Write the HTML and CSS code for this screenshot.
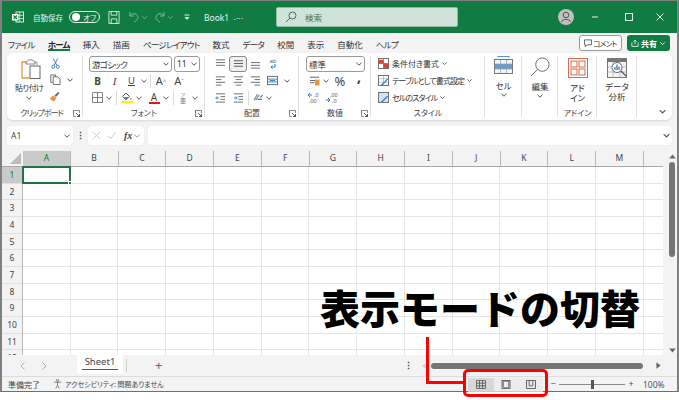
FILE: index.html
```html
<!DOCTYPE html>
<html lang="ja">
<head>
<meta charset="utf-8">
<title>Excel</title>
<link rel="stylesheet" href="styles.css">
</head>
<body>
<svg class="defs" width="0" height="0">
  <symbol id="chev" viewBox="0 0 8 8"><path d="M1.5 2.8 4 5.2 6.500 2.800" fill="none" stroke="currentColor" stroke-width="1"/></symbol>
  <symbol id="launch" viewBox="0 0 7 7"><path d="M.5 3V.5H6.500V3M.5 .5V6.500H3" fill="none" stroke="#666" stroke-width=".8"/><path d="M3 3 6.500 6.500M6.500 4V6.500H4" fill="none" stroke="#444" stroke-width=".9"/></symbol>
</svg>
<div class="window">
  <header class="titlebar">
    <svg class="ic-app" viewBox="0 0 12 12"><rect x="4" y="1" width="7.500" height="10" fill="none" stroke="#dfeee6"/><path d="M4 4.300H11.500M4 7.600H11.500M7.700 1V11" stroke="#dfeee6" stroke-width=".8"/><rect x="0" y="3" width="6.500" height="6.500" fill="#fff"/><path d="M1.500 4.500 5 8M5 4.500 1.500 8" stroke="#107c41" stroke-width="1.100"/></svg>
    <span class="autosave">自動保存</span>
    <span class="toggle"><i class="knob"></i><b>オフ</b></span>
    <svg class="ic-save" viewBox="0 0 12 14"><path d="M.5 .5H11.500V13.500H.5ZM3 .5V4.500H9V.5M3 13.500V8.500H9V13.500" fill="none" stroke="#d9eae0"/></svg>
    <svg class="ic-undo" viewBox="0 0 12 12"><path d="M2 1V5H6M2 5C4 2 8 2 9.500 4.500 11 7.500 8.500 10 6 11" fill="none" stroke="#7fb79a" stroke-width="1"/></svg>
    <svg class="tb-chev" viewBox="0 0 8 8"><use href="#chev"/></svg>
    <svg class="ic-redo" viewBox="0 0 12 12"><path d="M10 1V5H6M10 5C8 2 4 2 2.500 4.500 1 7.500 3.500 10 6 11" fill="none" stroke="#7fb79a" stroke-width="1"/></svg>
    <svg class="tb-chev" viewBox="0 0 8 8"><use href="#chev"/></svg>
    <svg class="ic-custom" viewBox="0 0 6 7"><path d="M.5 1H5.500" stroke="#dfeee6"/><path d="M.5 3 3 6 5.500 3Z" fill="#dfeee6"/></svg>
    <div class="doc">Book1 <small>-···</small></div>
    <div class="search">
      <svg class="ic-search" viewBox="0 0 12 12"><circle cx="7.500" cy="4.500" r="3.500" fill="none" stroke="#40755a"/><path d="M5 7 1 11" stroke="#40755a"/></svg>
      <span>検索</span>
    </div>
    <div class="spacer"></div>
    <svg class="avatar" viewBox="0 0 16 16"><circle cx="8" cy="8" r="8" fill="#c0c0c0"/><circle cx="8" cy="6" r="2.800" fill="none" stroke="#555"/><path d="M3.500 13C4 9.500 12 9.500 12.500 13" fill="none" stroke="#555"/></svg>
    <div class="winbtn min"><svg viewBox="0 0 8 8"><path d="M1 4H7" stroke="#e6f1eb"/></svg></div>
    <div class="winbtn"><svg viewBox="0 0 8 8"><rect x=".5" y=".5" width="7" height="7" fill="none" stroke="#e6f1eb"/></svg></div>
    <div class="winbtn"><svg viewBox="0 0 8 8"><path d="M.5 .5 7.500 7.500M7.500 .5 .5 7.500" stroke="#e6f1eb"/></svg></div>
  </header>

  <nav class="tabs">
    <span class="tab kana">ファイル</span>
    <span class="tab kana active">ホーム</span>
    <span class="tab">挿入</span>
    <span class="tab">描画</span>
    <span class="tab kana">ページレイアウト</span>
    <span class="tab">数式</span>
    <span class="tab kana">データ</span>
    <span class="tab">校閲</span>
    <span class="tab">表示</span>
    <span class="tab">自動化</span>
    <span class="tab kana">ヘルプ</span>
    <div class="spacer"></div>
    <button class="comment"><svg viewBox="0 0 9 9"><path d="M.5 1H8.500V6.500H3.500L1.500 8.500V6.500H.5Z" fill="none" stroke="#444" stroke-width=".9"/></svg><span class="kana">コメント</span></button>
    <button class="share"><svg viewBox="0 0 9 9"><path d="M1 4V8.300H8V4M4.500 6V1.500M2.800 3 4.500 1.300 6.200 3" fill="none" stroke="#fff" stroke-width=".9"/></svg>共有<svg class="share-chev" viewBox="0 0 8 8"><use href="#chev"/></svg></button>
  </nav>

  <section class="ribbon">
    <div class="group g-clip">
      <div class="body clip">
        <div class="big paste">
          <svg class="ic-paste" viewBox="0 0 20 20"><path d="M5 3H1V19H8" fill="none" stroke="#e69a3c" stroke-width="1.300"/><path d="M14 3H16V6" fill="none" stroke="#999" /><path d="M5 3 8 .8H11L14 3V5H5Z" fill="#fff" stroke="#777" stroke-width=".9"/><rect x="9" y="7" width="10" height="12.500" fill="#fff" stroke="#666"/></svg>
          <span>貼り付け</span>
          <svg class="chev" viewBox="0 0 8 8"><use href="#chev"/></svg>
        </div>
        <div class="clip-tools">
          <div class="row r-cut"><svg class="ic" viewBox="0 0 12 12"><path d="M3.500 .5 7.500 8M8.500 .5 4.500 8" stroke="#3b77b8" stroke-width="1"/><circle cx="3.500" cy="9.500" r="1.700" fill="none" stroke="#3b77b8"/><circle cx="8.500" cy="9.500" r="1.700" fill="none" stroke="#3b77b8"/></svg></div>
          <div class="row r-copy"><svg class="ic" viewBox="0 0 12 12"><path d="M3 9H.8V1H6V3" fill="none" stroke="#555" stroke-width=".9"/><path d="M3.500 3H8.500L11 5.500V11.500H3.500Z" fill="#fff" stroke="#555" stroke-width=".9"/></svg><svg class="chev" viewBox="0 0 8 8"><use href="#chev"/></svg></div>
          <div class="row r-brush"><svg class="ic" viewBox="0 0 12 12"><path d="M.8 8 5 5 8 8 5.500 11.500C4 11 2 10 .8 8Z" fill="#e8963a"/><path d="M6 5 10 1 11.500 2.500 7.500 6.500" fill="#6a6a6a"/></svg></div>
        </div>
      </div>
      <div class="label label-clip">クリップボード<svg class="launch"><use href="#launch"/></svg></div>
    </div>

    <div class="group g-font">
      <div class="body">
        <div class="row selects">
          <div class="select font-name"><span class="kana">游ゴシック</span><svg class="chev" viewBox="0 0 8 8"><use href="#chev"/></svg></div>
          <div class="select font-size"><span>11</span><svg class="chev" viewBox="0 0 8 8"><use href="#chev"/></svg></div>
        </div>
        <div class="row">
          <span class="s17 glyph bold">B</span>
          <span class="s17 glyph ital">I</span>
          <span class="s17 glyph under">U</span>
          <span class="s8"><svg class="chev" viewBox="0 0 8 8"><use href="#chev"/></svg></span>
          <i class="sep w4"></i>
          <span class="s18 glyph grow">A<sup>^</sup></span>
          <span class="s18 glyph grow">A<sup class="blue">ˇ</sup></span>
        </div>
        <div class="row">
          <span class="s16"><svg class="ic" viewBox="0 0 12 12"><path d="M.5 .5H11.500V11.500H.5ZM6 .5V11.500M.5 6H11.500" fill="none" stroke="#666" stroke-width=".9"/></svg></span>
          <span class="s8"><svg class="chev" viewBox="0 0 8 8"><use href="#chev"/></svg></span>
          <i class="sep w6"></i>
          <span class="s16 colored"><svg class="ic-fill" viewBox="0 0 12 9"><path d="M1.500 4.500 5 1 8.500 4.500 5 8Z" fill="#fff" stroke="#555"/><path d="M2 5H8L5 8Z" fill="#4a8fcf"/><path d="M10 5.500C11 7 11 8 10 8 9 8 9 7 10 5.500Z" fill="#e8963a"/></svg><i class="bar yellow"></i></span>
          <span class="s8"><svg class="chev" viewBox="0 0 8 8"><use href="#chev"/></svg></span>
          <span class="s16 colored ml3"><span class="glyph color-a">A</span><i class="bar red"></i></span>
          <span class="s8"><svg class="chev" viewBox="0 0 8 8"><use href="#chev"/></svg></span>
          <i class="sep w5"></i>
          <span class="s16 phon"><small>ア</small><b>亜</b></span>
          <span class="s8"><svg class="chev" viewBox="0 0 8 8"><use href="#chev"/></svg></span>
        </div>
      </div>
      <div class="label">フォント<svg class="launch"><use href="#launch"/></svg></div>
    </div>

    <div class="group g-align">
      <div class="body">
        <div class="row">
          <span class="s18"><svg class="ic" viewBox="0 0 12 12"><path d="M1 2H11M1 5H11M1 8H11" stroke="#666"/></svg></span>
          <span class="s18 pressed"><svg class="ic" viewBox="0 0 12 12"><path d="M1 3H11M1 6H11M1 9H11" stroke="#555"/></svg></span>
          <span class="s17"><svg class="ic" viewBox="0 0 12 12"><path d="M1 5H11M1 8H11M1 11H11" stroke="#666"/></svg></span>
          <span class="s18 wrap"><span>ab</span><svg viewBox="0 0 8 6"><path d="M6 0V3H2M3.500 1.500 2 3 3.500 4.500" fill="none" stroke="#2b7cd3"/></svg></span>
        </div>
        <div class="row">
          <span class="s18"><svg class="ic" viewBox="0 0 12 12"><path d="M1 2H11M1 5H7M1 8H11M1 11H7" stroke="#666"/></svg></span>
          <span class="s18"><svg class="ic" viewBox="0 0 12 12"><path d="M1 2H11M3 5H9M1 8H11M3 11H9" stroke="#666"/></svg></span>
          <span class="s17"><svg class="ic" viewBox="0 0 12 12"><path d="M1 2H11M5 5H11M1 8H11M5 11H11" stroke="#666"/></svg></span>
          <span class="s16"><svg class="ic" viewBox="0 0 12 12"><rect x=".5" y="1.500" width="11" height="9" fill="none" stroke="#666"/><path d="M.5 4.500H11.500M.5 7.500H11.500" stroke="#2b7cd3"/><path d="M3 6H9" stroke="#2b7cd3"/></svg></span>
          <span class="s8 nudge"><svg class="chev" viewBox="0 0 8 8"><use href="#chev"/></svg></span>
        </div>
        <div class="row">
          <span class="s18"><svg class="ic" viewBox="0 0 12 12"><path d="M1 2H11M6 5H11M6 8H11M1 11H11" stroke="#666"/><path d="M1 6.500H4.500M2.500 4.800 .8 6.500 2.500 8.200" fill="none" stroke="#2b7cd3"/></svg></span>
          <span class="s18"><svg class="ic" viewBox="0 0 12 12"><path d="M1 2H11M6 5H11M6 8H11M1 11H11" stroke="#666"/><path d="M1 6.500H4.500M3 4.800 4.700 6.500 3 8.200" fill="none" stroke="#2b7cd3"/></svg></span>
          <i class="sep w2"></i>
          <span class="s16"><svg class="ic" viewBox="0 0 12 12"><path d="M2 9 6 2.500M4 9 8 3" stroke="#777" stroke-width="1.100"/><path d="M6 8H11M9 6 11.500 3.500" stroke="#2b7cd3" stroke-width="1.200"/></svg></span>
          <span class="s8"><svg class="chev" viewBox="0 0 8 8"><use href="#chev"/></svg></span>
        </div>
      </div>
      <div class="label">配置<svg class="launch"><use href="#launch"/></svg></div>
    </div>

    <div class="group g-num">
      <div class="body">
        <div class="row"><div class="select num-format"><span>標準</span><svg class="chev" viewBox="0 0 8 8"><use href="#chev"/></svg></div></div>
        <div class="row">
          <span class="s16"><svg class="ic" viewBox="0 0 12 12"><path d="M1 2.500H11M1 6H7M1 8.500H6" stroke="#666" stroke-width="1.200"/><rect x="6.500" y="5" width="5" height="6.500" fill="#e8963a"/></svg></span>
          <span class="s8 ml-s"><svg class="chev" viewBox="0 0 8 8"><use href="#chev"/></svg></span>
          <span class="s18 glyph pct">%</span>
          <span class="s16 comma">,</span>
        </div>
        <div class="row">
          <span class="s16 dec"><svg viewBox="0 0 14 12"><path d="M1 3H5M3 1 1 3 3 5" fill="none" stroke="#2b7cd3"/><text x="7" y="5" class="dectxt">.0</text><text x="2" y="11" class="dectxt">.00</text></svg></span>
          <span class="s16 dec ml2"><svg viewBox="0 0 14 12"><path d="M1 8H5M3 6 5 8 3 10" fill="none" stroke="#2b7cd3"/><text x="5" y="5" class="dectxt">.00</text><text x="7" y="11" class="dectxt">.0</text></svg></span>
        </div>
      </div>
      <div class="label">数値<svg class="launch"><use href="#launch"/></svg></div>
    </div>

    <div class="group g-style">
      <div class="body">
        <div class="row style-row"><svg class="ic" viewBox="0 0 12 12"><rect x=".5" y=".5" width="11" height="11" fill="#fff" stroke="#666"/><path d="M.5 2H6V6H.5ZM6 6H11.500V11H6Z" fill="#d9453a"/><path d="M6 .5V11.500M.5 6H11.500" stroke="#666" stroke-width=".7"/></svg><span>条件付き書式</span><svg class="chev" viewBox="0 0 8 8"><use href="#chev"/></svg></div>
        <div class="row style-row"><svg class="ic" viewBox="0 0 12 12"><rect x=".5" y=".5" width="11" height="11" fill="#fff" stroke="#666"/><path d="M.5 4H11.500M.5 8H11.500M6 .5V11.500" stroke="#8aa" stroke-width=".7"/><path d="M3 11 10 4 11 5 4.500 11.500Z" fill="#2b7cd3"/></svg><span class="kana">テーブルとして書式設定</span><svg class="chev" viewBox="0 0 8 8"><use href="#chev"/></svg></div>
        <div class="row style-row"><svg class="ic" viewBox="0 0 12 12"><rect x=".5" y=".5" width="11" height="11" fill="#cfe3f5" stroke="#666"/><path d="M3 11 10 4 11 5 4.500 11.500Z" fill="#2b7cd3"/></svg><span class="kana">セルのスタイル</span><svg class="chev" viewBox="0 0 8 8"><use href="#chev"/></svg></div>
      </div>
      <div class="label">スタイル</div>
    </div>

    <div class="group g-cell">
      <div class="body bigcol">
        <svg class="ic-big" viewBox="0 0 19 19"><path d="M4 .5H15M4 0V1.500M15 0V1.500" stroke="#2b7cd3" stroke-width=".8"/><rect x=".5" y="3.500" width="18" height="14" fill="#f4f4f4" stroke="#777"/><rect x="1" y="8" width="17" height="5" fill="#5ba0dd"/><path d="M6.500 3.500V17.500M12.500 3.500V17.500M.5 8H18.500M.5 13H18.500" stroke="#999" stroke-width=".7"/></svg>
        <span class="biglabel">セル</span>
        <svg class="chev" viewBox="0 0 8 8"><use href="#chev"/></svg>
      </div>
      <div class="label"></div>
    </div>

    <div class="group g-edit">
      <div class="body bigcol">
        <svg class="ic-big" viewBox="0 0 21 21"><circle cx="13" cy="8" r="7" fill="none" stroke="#666"/><path d="M8 13 1 20" stroke="#666"/></svg>
        <span class="biglabel">編集</span>
        <svg class="chev" viewBox="0 0 8 8"><use href="#chev"/></svg>
      </div>
      <div class="label"></div>
    </div>

    <div class="group g-addin">
      <div class="body bigcol">
        <svg class="ic-big" viewBox="0 0 20 20"><rect x=".5" y=".5" width="19" height="19" fill="none" stroke="#d86b4d"/><rect x="3" y="3" width="6" height="6" fill="none" stroke="#d86b4d"/><rect x="11" y="3" width="6" height="6" fill="none" stroke="#d86b4d"/><rect x="3" y="11" width="6" height="6" fill="none" stroke="#d86b4d"/><rect x="11" y="11" width="6" height="6" fill="none" stroke="#d86b4d"/></svg>
        <span class="biglabel two">アド<br>イン</span>
      </div>
      <div class="label">アドイン</div>
    </div>

    <div class="group g-data">
      <div class="body bigcol">
        <svg class="ic-big" viewBox="0 0 20 20"><rect x=".5" y=".5" width="19" height="19" fill="#f4f4f4" stroke="#777"/><rect x="1" y="1" width="18" height="3" fill="#777"/><path d="M.5 9H19.500M.5 14H19.500M6 4V19.500M13 4V19.500" stroke="#aaa" stroke-width=".7"/><circle cx="10" cy="9.500" r="5" fill="#fff" stroke="#666"/><path d="M8 12V9M10 12V6.500M12 12V8.500" stroke="#2b7cd3" stroke-width="1.300"/><path d="M14 13 19 18" stroke="#555" stroke-width="1.300"/></svg>
        <span class="biglabel two tight">データ<br>分析</span>
      </div>
      <div class="label"></div>
    </div>

    <div class="group g-end">
      <svg class="collapse" viewBox="0 0 8 8"><use href="#chev"/></svg>
    </div>
  </section>

  <section class="formula">
    <div class="namebox"><span>A1</span><svg class="chev" viewBox="0 0 8 8"><use href="#chev"/></svg></div>
    <span class="dots">⋮</span>
    <div class="funcbox">
      <svg class="fx-ic" viewBox="0 0 10 10"><path d="M1 1 9 9M9 1 1 9" stroke="#c4c4c4"/></svg>
      <svg class="fx-ic" viewBox="0 0 10 10"><path d="M1 5.500 4 8.500 9.500 1.500" fill="none" stroke="#c4c4c4"/></svg>
      <span class="fx">fx</span>
      <svg class="chev" viewBox="0 0 8 8"><use href="#chev"/></svg>
    </div>
    <div class="input"><svg class="chev" viewBox="0 0 8 8"><use href="#chev"/></svg></div>
  </section>

  <section class="sheet">
    <div class="grid-wrap">
      <div class="colheads">
        <div class="corner"><i></i></div>
        <span class="ch sel">A</span><span class="ch">B</span><span class="ch">C</span><span class="ch">D</span><span class="ch">E</span><span class="ch">F</span><span class="ch">G</span><span class="ch">H</span><span class="ch">I</span><span class="ch">J</span><span class="ch">K</span><span class="ch">L</span><span class="ch">M</span><span class="ch"></span>
      </div>
      <div class="gridbody">
        <div class="rowheads">
          <span class="rh sel">1</span><span class="rh">2</span><span class="rh">3</span><span class="rh">4</span><span class="rh">5</span><span class="rh">6</span><span class="rh">7</span><span class="rh">8</span><span class="rh">9</span><span class="rh">10</span><span class="rh">11</span><span class="rh">12</span>
        </div>
        <div class="cells"><div class="active-cell"><i></i></div></div>
      </div>
    </div>
    <div class="vscroll">
      <svg class="arrow" viewBox="0 0 8 6"><path d="M4 .5 8 5.500H0Z" fill="#666"/></svg>
      <i class="vthumb"></i>
      <div class="spacer"></div>
      <svg class="arrow" viewBox="0 0 8 6"><path d="M4 5.500 8 .5H0Z" fill="#666"/></svg>
    </div>
  </section>

  <section class="sheettabs">
    <svg class="nav" viewBox="0 0 6 8"><path d="M4.500 .5 1 4 4.500 7.500" fill="none" stroke="#aaa"/></svg>
    <svg class="nav nav2" viewBox="0 0 6 8"><path d="M1.500 .5 5 4 1.500 7.500" fill="none" stroke="#aaa"/></svg>
    <div class="sheet-tab"><span>Sheet1</span></div>
    <i class="tab-sep"></i>
    <span class="plus">+</span>
    <div class="spacer"></div>
    <span class="dots tabdots">⋮</span>
    <svg class="hleft" viewBox="0 0 6 8"><path d="M.5 4 5.500 0V8Z" fill="#ccc"/></svg>
    <i class="hthumb"></i>
    <svg class="hright" viewBox="0 0 6 8"><path d="M5.500 4 .5 0V8Z" fill="#666"/></svg>
  </section>

  <footer class="status">
    <span class="ready">準備完了</span>
    <svg class="ic-access" viewBox="0 0 11 11"><circle cx="5" cy="1.500" r="1.200" fill="none" stroke="#555" stroke-width=".8"/><path d="M1 3.500H9M5 3.500V7L3 10.500M5 7 7 10.500" fill="none" stroke="#555" stroke-width=".8"/></svg>
    <span class="access">アクセシビリティ: 問題ありません</span>
    <div class="spacer"></div>
    <div class="views">
      <span class="view on"><svg viewBox="0 0 11 10"><path d="M.5 .5H10.500V9.500H.5ZM.5 3.500H10.500M.5 6.500H10.500M3.800 .5V9.500M7.200 .5V9.500" fill="none" stroke="#444" stroke-width=".8"/></svg></span>
      <span class="view"><svg viewBox="0 0 10 10"><rect x=".5" y=".5" width="9" height="9" fill="#bbb" stroke="#444" stroke-width=".8"/><rect x="2.500" y="1.500" width="5" height="7" fill="#eee" stroke="#555" stroke-width=".6"/></svg></span>
      <span class="view"><svg viewBox="0 0 11 10"><path d="M.5 .5H10.500V9.500H.5ZM3.500 .5V6.500H7.500V.5" fill="none" stroke="#444" stroke-width=".9"/></svg></span>
    </div>
    <span class="zoom-sign">−</span>
    <div class="slider"><i></i></div>
    <span class="zoom-sign">+</span>
    <span class="pct100">100%</span>
  </footer>

  <div class="callout-title">表示モードの切替</div>
  <i class="callout-v"></i>
  <i class="callout-h"></i>
  <i class="callout-box"></i>
</div>
</body>
</html>
```

FILE: styles.css
```css
* { box-sizing: border-box; }
html, body { margin: 0; padding: 0; background: #fff; }
body { width: 679px; height: 400px; overflow: hidden; font-family: "Noto Sans CJK JP", "Noto Sans", sans-serif; font-feature-settings: "palt"; color: #333; }
.defs { position: absolute; }
svg { display: block; flex: none; }
i { display: block; }
button { font: inherit; padding: 0; }
.spacer { flex: 1; }
.kana { letter-spacing: -.7px; }
.window { position: relative; width: 679px; height: 392px; border: 2px solid #808080; border-top-width: 1px; border-bottom: 1px solid #3f8a63; background: #f3f3f3; display: flex; flex-direction: column; }

/* title bar */
.titlebar { height: 32px; background: #107c41; display: flex; align-items: center; color: #e8f2ec; flex: none; padding-right: 2px; }
.ic-app { width: 12px; height: 12px; margin-left: 10px; }
.autosave { font-size: 7.500px; margin-left: 9px; width: 30px; white-space: nowrap; }
.toggle { margin-left: 6px; width: 31px; height: 12px; border: 1px solid #e8f2ec; border-radius: 7px; display: flex; align-items: center; padding-left: 2px; }
.knob { width: 8px; height: 8px; border-radius: 50%; background: #fff; }
.toggle b { font-weight: 400; font-size: 7.500px; margin-left: 3px; }
.ic-save { width: 12px; height: 13px; margin-left: 8px; }
.ic-undo, .ic-redo { width: 12px; height: 12px; margin-left: 8px; }
.ic-redo { margin-left: 6px; }
.tb-chev { width: 7px; height: 7px; color: #7fb79a; margin-left: 1px; }
.ic-custom { width: 6px; height: 7px; margin-left: 10px; }
.doc { margin-left: 14px; width: 72px; font-family: "Noto Sans", sans-serif; font-size: 8.500px; white-space: nowrap; }
.doc small { font-size: 7px; margin-left: 2px; letter-spacing: .5px; }
.search { width: 182px; height: 20px; background: #cfe3d8; border: 1px solid #8fb9a3; border-radius: 2px; display: flex; align-items: center; padding-left: 8px; color: #40755a; font-size: 8.500px; }
.search span { margin-left: 8px; }
.ic-search { width: 12px; height: 12px; }
.avatar { width: 16px; height: 16px; margin-right: 5px; }
.winbtn { width: 31px; display: flex; justify-content: center; }
.winbtn svg { width: 8px; height: 8px; }
.winbtn.min { margin-right: 3px; }

/* tabs */
.tabs { height: 20px; flex: none; display: flex; align-items: flex-start; padding: 0 7px 0 6px; gap: 13px; font-size: 8.500px; color: #333; }
.tab { height: 18px; line-height: 22px; position: relative; white-space: nowrap; }
.tab.active { font-weight: 700; color: #222; }
.tab.active::after { content: ""; position: absolute; left: 0; right: 0; bottom: 0; height: 2px; background: #107c41; }
.comment { margin-top: 2px; width: 43px; height: 16px; background: #fff; border: 1px solid #999; border-radius: 3px; font-size: 7.500px; display: flex; align-items: center; justify-content: center; gap: 1px; color: #333; margin-right: -8px; }
.comment svg { width: 8px; height: 8px; }
.share { margin-top: 2px; width: 43px; height: 16px; background: #107c41; border: 0; border-radius: 3px; font-size: 8px; font-weight: 700; color: #fff; display: flex; align-items: center; justify-content: center; gap: 2px; }
.share svg { width: 8px; height: 8px; }
.share svg.share-chev { width: 7px; height: 7px; color: #fff; }

/* ribbon */
.ribbon { flex: none; height: 67px; margin-left: 5px; width: 665px; background: #fff; border-radius: 6px; display: flex; box-shadow: 0 1px 2px rgba(0,0,0,.12); font-size: 8.500px; }
.group { display: flex; flex-direction: column; position: relative; flex: none; }
.group::after { content: ""; position: absolute; right: 0; top: 3px; bottom: 3px; width: 1px; background: #e1e1e1; }
.g-clip { width: 76px; } .g-font { width: 122px; } .g-align { width: 94px; } .g-num { width: 72px; }
.g-style { width: 114px; } .g-cell { width: 37px; } .g-edit { width: 36px; } .g-addin { width: 39px; } .g-data { width: 40px; }
.g-end { width: 35px; }
.g-end::after { display: none; }
.body { height: 53px; padding-top: 2px; flex: none; }
.label { height: 14px; line-height: 14px; text-align: center; font-size: 8px; color: #444; position: relative; }
.label-clip { letter-spacing: -1px; padding-right: 7px; }
.launch { position: absolute; right: 3px; top: 4px; width: 7px; height: 7px; }
.row { height: 17px; display: flex; align-items: center; }
.chev { width: 8px; height: 8px; color: #555; }
.ic { width: 11px; height: 11px; }
.s8, .s16, .s17, .s18 { display: flex; align-items: center; justify-content: center; flex: none; height: 17px; }
.s8 { width: 8px; } .s16 { width: 16px; } .s17 { width: 17px; } .s18 { width: 18px; }
.ml3 { margin-left: 3px; } .ml2 { margin-left: 2px; }
.sep { height: 14px; flex: none; position: relative; }
.sep::after { content: ""; position: absolute; left: 50%; top: 0; bottom: 0; width: 1px; background: #d9d9d9; }
.w2 { width: 2px; } .w4 { width: 4px; } .w5 { width: 5px; } .w6 { width: 6px; }
.glyph { font-family: "Noto Sans", sans-serif; font-size: 10px; color: #444; }
.bold { font-weight: 700; }
.ital { font-style: italic; font-family: "Liberation Serif", serif; font-size: 11px; }
.under { text-decoration: underline; font-size: 9.500px; }
.grow { font-size: 11px; }
.grow sup { font-size: 6px; line-height: 0; vertical-align: 4px; color: #2b7cd3; }
.colored { flex-direction: column; gap: 0; }
.ic-fill { width: 12px; height: 9px; }
.bar { width: 11px; height: 2px; }
.bar.yellow { background: #ffef00; }
.bar.red { background: #e8101c; }
.color-a { line-height: 10px; font-size: 10px; }
.phon { position: relative; flex-direction: column; font-size: 5px; line-height: 6px; color: #777; }
.phon small { font-size: 5px; }
.phon b { font-weight: 400; font-size: 6px; }

/* clipboard */
.clip { display: flex; padding-left: 8px; padding-top: 0; }
.big { display: flex; flex-direction: column; align-items: center; width: 34px; }
.ic-paste { width: 20px; height: 20px; margin-top: 6px; margin-left: 4px; }
.big span { margin-top: 2px; font-size: 8px; line-height: 13px; white-space: nowrap; letter-spacing: -.5px; }
.paste .chev { margin-top: 0; }
.clip-tools { margin-left: 0; padding-top: 3px; }
.r-cut, .r-brush { padding-left: 6px; }
.r-copy { padding-left: 0; width: 40px; }
.r-copy .ic { margin-right: 5px; }
.r-cut { height: 15px; padding-left: 7px; }
.r-copy { padding-left: 7px; }

/* font group */
.g-font .row { padding-left: 6px; }
.selects { gap: 2px; }
.select { height: 16px; border: 1px solid #9a9a9a; border-radius: 3px; display: flex; align-items: center; justify-content: space-between; padding: 0 1px 0 2px; font-size: 8.500px; }
.font-name { width: 83px; }
.font-size { width: 26px; font-family: "Noto Sans", sans-serif; }
.g-align .row { padding-left: 6px; }
.pressed { background: #efefef; border: 1px solid #8a8a8a; border-radius: 3px; height: 16px; }
.wrap { flex-direction: column; font-size: 6px; line-height: 6px; color: #666; font-family: "Noto Sans", sans-serif; }
.wrap svg { width: 8px; height: 6px; }
.nudge { margin-left: 3px; }

/* number */
.g-num .row { padding-left: 7px; }
.num-format { width: 59px; }
.ml-s { margin-left: 0; margin-right: 1px; }
.pct { font-size: 13px; font-family: "Noto Sans", sans-serif; color: #444; }
.comma { font-family: "Noto Sans", sans-serif; font-weight: 700; font-size: 14px; line-height: 10px; align-items: flex-start; color: #333; margin-left: 2px; }
.dec svg { width: 14px; height: 12px; }
.dectxt { font-family: "Noto Sans", sans-serif; font-size: 5.500px; fill: #555; }

/* style */
.style-row { padding-left: 7px; gap: 3px; font-size: 8px; white-space: nowrap; }
.style-row .kana { letter-spacing: -.9px; }
.style-row .chev { margin-left: -1px; width: 7px; height: 7px; }

/* big buttons */
.bigcol { display: flex; flex-direction: column; align-items: center; padding-top: 3px; }
.ic-big { width: 19px; height: 19px; }
.g-edit .ic-big { width: 20px; height: 20px; margin-top: 1px; margin-bottom: -1px; }
.g-addin .ic-big, .g-data .ic-big { width: 20px; height: 20px; margin-top: 2px; }
.biglabel { font-size: 8.500px; line-height: 10px; margin-top: 5px; text-align: center; }
.biglabel.two { margin-top: 4px; }
.biglabel.tight { margin-top: 3px; }
.bigcol .chev { margin-top: 1px; }
.collapse { width: 9px; height: 9px; color: #555; margin: 54px 0 0 21px; }

/* formula */
.formula { flex: none; height: 19px; margin: 6px 5px 6px 5px; display: flex; align-items: stretch; font-family: "Noto Sans", sans-serif; }
.namebox, .funcbox, .input { background: #fff; border-radius: 3px; display: flex; align-items: center; box-shadow: 0 0 1px rgba(0,0,0,.15); }
.namebox { width: 66px; justify-content: space-between; padding: 0 2px 0 4px; font-size: 8.500px; color: #444; }
.dots { width: 15px; text-align: center; font-size: 9px; line-height: 19px; color: #444; font-weight: 700; }
.funcbox { width: 56px; padding-left: 4px; gap: 6px; }
.fx-ic { width: 9px; height: 9px; }
.fx { font-family: "Liberation Serif", serif; font-style: italic; font-weight: 700; font-size: 10px; color: #444; margin-left: 2px; }
.funcbox .chev { margin-left: -5px; color: #999; }
.input { flex: 1; margin-left: 4px; justify-content: flex-end; padding-right: 1px; }
.input .chev { width: 9px; height: 9px; }

/* sheet */
.sheet { flex: none; height: 204px; display: flex; background: #fff; font-family: "Noto Sans", sans-serif; }
.grid-wrap { flex: 1; min-width: 0; overflow: hidden; display: flex; flex-direction: column; }
.colheads { height: 16px; flex: none; display: flex; background: #f3f3f3; border-bottom: 1px solid #a8a8a8; }
.corner { width: 21px; flex: none; position: relative; }
.corner i { width: 0; height: 0; margin: 2px 0 0 8px; border-style: solid; border-width: 0 0 11px 11px; border-color: transparent transparent #bcbcbc transparent; }
.ch { width: 47.750px; flex: none; text-align: center; font-size: 8.500px; line-height: 13px; color: #444; border-right: 1px solid #b8b8b8; }
.ch.sel { background: #cacaca; color: #107c41; }
.gridbody { flex: 1; display: flex; min-height: 0; }
.rowheads { width: 21px; flex: none; background: #f3f3f3; border-right: 1px solid #b8b8b8; }
.rh { display: block; height: 16.670px; line-height: 16px; text-align: center; font-size: 8.500px; color: #444; border-bottom: 1px solid #e0e0e0; }
.rh.sel { background: #cacaca; color: #107c41; }
.cells { flex: 1; position: relative; background-color: #fff; background-image: repeating-linear-gradient(to right, transparent 0, transparent 46.750px, #e6e6e6 46.750px, #e6e6e6 47.750px), repeating-linear-gradient(to bottom, transparent 0, transparent 15.670px, #e6e6e6 15.670px, #e6e6e6 16.670px); }
.active-cell { position: absolute; left: -1px; top: -1px; width: 49px; height: 18px; border: 2px solid #217346; }
.active-cell i { position: absolute; right: -3px; bottom: -3px; width: 4px; height: 4px; background: #217346; border: 1px solid #fff; box-sizing: content-box; width: 2px; height: 2px; }
.vscroll { width: 14px; flex: none; background: #f3f3f3; display: flex; flex-direction: column; align-items: center; padding: 3px 0 2px 4px; }
.vscroll .arrow { width: 7px; height: 5px; }
.vthumb { width: 6px; height: 95px; margin-top: 3px; background: #757575; border-radius: 3px; }

/* sheet tabs */
.sheettabs { flex: none; height: 21px; display: flex; align-items: center; padding-left: 18px; }
.nav { width: 6px; height: 8px; }
.nav2 { margin-left: 15px; }
.sheet-tab { margin-left: 30px; width: 46px; height: 19px; align-self: flex-start; background: #fff; border-radius: 0 0 3px 3px; text-align: center; font-family: "Noto Sans", sans-serif; font-size: 9.500px; line-height: 14px; position: relative; color: #444; }
.sheet-tab::after { content: ""; position: absolute; left: 5px; right: 5px; bottom: 4px; height: 1px; background: #107c41; }
.tab-sep { width: 1px; height: 13px; background: #d0d0d0; margin-left: 3px; }
.plus { margin-left: 28px; font-family: "Noto Sans", sans-serif; font-size: 13px; line-height: 13px; color: #666; }
.tabdots { width: auto; line-height: 21px; }
.hleft { width: 4px; height: 6px; margin-left: 9px; }
.hthumb { width: 212px; height: 6px; margin-left: 5px; background: #757575; border-radius: 3px; }
.hright { width: 5px; height: 7px; margin-left: 13px; margin-right: 16px; }

/* status */
.status { flex: none; height: 15px; display: flex; align-items: center; border-top: 1px solid #dcdcdc; padding: 0 8px 0 6px; font-size: 8px; color: #444; }
.ready { width: 45px; white-space: nowrap; }
.ic-access { width: 10px; height: 10px; }
.access { font-size: 7px; margin-left: 2px; white-space: nowrap; }
.views { width: 75px; height: 14px; display: flex; background: #ececec; border-bottom: 1px solid #b9d3c5; margin-top: 1px; }
.view { flex: 1; display: flex; justify-content: center; align-items: center; }
.view svg { width: 10px; height: 9px; }
.view.on { background: #d8d8d8; flex: 1.060; }
.zoom-sign { width: 8px; margin-left: 6px; text-align: center; font-family: "Noto Sans", sans-serif; font-size: 9px; line-height: 12px; color: #555; }
.slider { width: 66px; height: 1px; background: #888; position: relative; margin-left: 2px; }
.slider i { position: absolute; left: 32px; top: -4px; width: 3px; height: 9px; background: #555; }
.zoom-sign + .slider + .zoom-sign { margin-left: 2px; }
.pct100 { width: 34px; padding-left: 8px; font-family: "Noto Sans", sans-serif; font-size: 8.500px; color: #555; }

/* annotation */
.callout-title { position: absolute; left: 318px; top: 280px; width: 330px; font-size: 40px; line-height: 52px; font-weight: 900; color: #000; white-space: nowrap; font-feature-settings: normal; }
.callout-v { position: absolute; left: 424px; top: 336px; width: 3px; height: 47px; background: #f00; }
.callout-h { position: absolute; left: 424px; top: 380px; width: 40px; height: 3px; background: #f00; }
.callout-box { position: absolute; left: 461px; top: 368px; width: 85px; height: 28px; border: 3px solid #f00; border-radius: 5px; background: transparent; }
```
